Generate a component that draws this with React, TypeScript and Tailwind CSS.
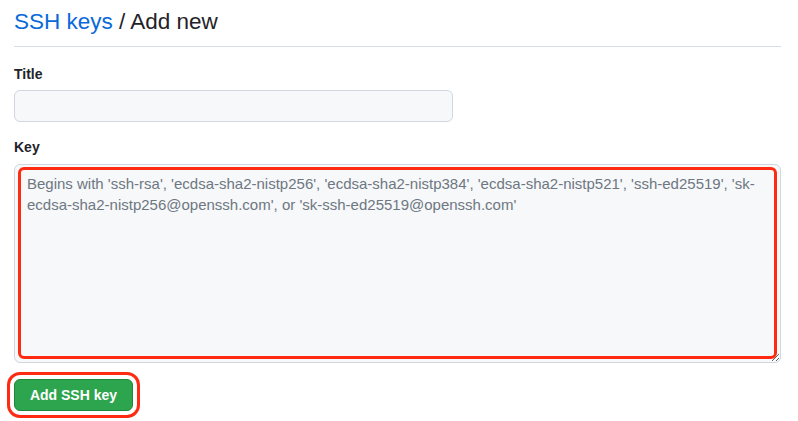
import { useState } from "react";

const KEY_HINT =
  "Begins with 'ssh-rsa', 'ecdsa-sha2-nistp256', 'ecdsa-sha2-nistp384', 'ecdsa-sha2-nistp521', 'ssh-ed25519', 'sk-ecdsa-sha2-nistp256@openssh.com', or 'sk-ssh-ed25519@openssh.com'";

export default function App() {
  const [title, setTitle] = useState("");
  const [key, setKey] = useState("");

  return (
    <div className="min-h-[421px] bg-white pl-[14px] pr-[17px] font-['Liberation_Sans',Arial,sans-serif] text-[#1f2328]">
      <h1 className="border-b border-[#d8dee4] pt-[7px] pb-[9px] text-[22.5px] leading-[30px] font-normal">
        <a href="#" className="text-[#0969da]">
          SSH keys
        </a>{" "}
        / Add new
      </h1>

      <form className="flex flex-col" onSubmit={(e) => e.preventDefault()}>
        <label className="mt-[17px] text-[14px] leading-[20px] font-bold">Title</label>
        <input
          value={title}
          onChange={(e) => setTitle(e.target.value)}
          className="mt-[6px] h-[32px] w-[439px] rounded-md border border-[#d0d7de] bg-[#f6f8fa] px-3 text-[14px] outline-none"
        />

        <label className="mt-[15px] text-[14px] leading-[20px] font-bold">Key</label>
        <div className="relative mt-[7px]">
          <textarea
            value={key}
            onChange={(e) => setKey(e.target.value)}
            placeholder={KEY_HINT}
            className="block h-[199px] w-full resize-y rounded-md border border-[#d0d7de] bg-[#f6f8fa] px-3 py-[8px] text-[15px] leading-[21px] outline-none placeholder:text-[#6e7781]"
          />
          <div className="pointer-events-none absolute inset-x-[4px] top-[3px] bottom-[4px] rounded-md border-[3px] border-[#ff2a12]" />
        </div>

        <div className="mt-[16px]">
          <button
            type="submit"
            className="h-[32px] w-[119px] rounded-md border border-[#1f883d] bg-[#2da44e] text-[14px] font-bold text-white outline-[3px] outline-offset-[4px] outline-[#ff2a12] outline-solid"
          >
            Add SSH key
          </button>
        </div>
      </form>
    </div>
  );
}
